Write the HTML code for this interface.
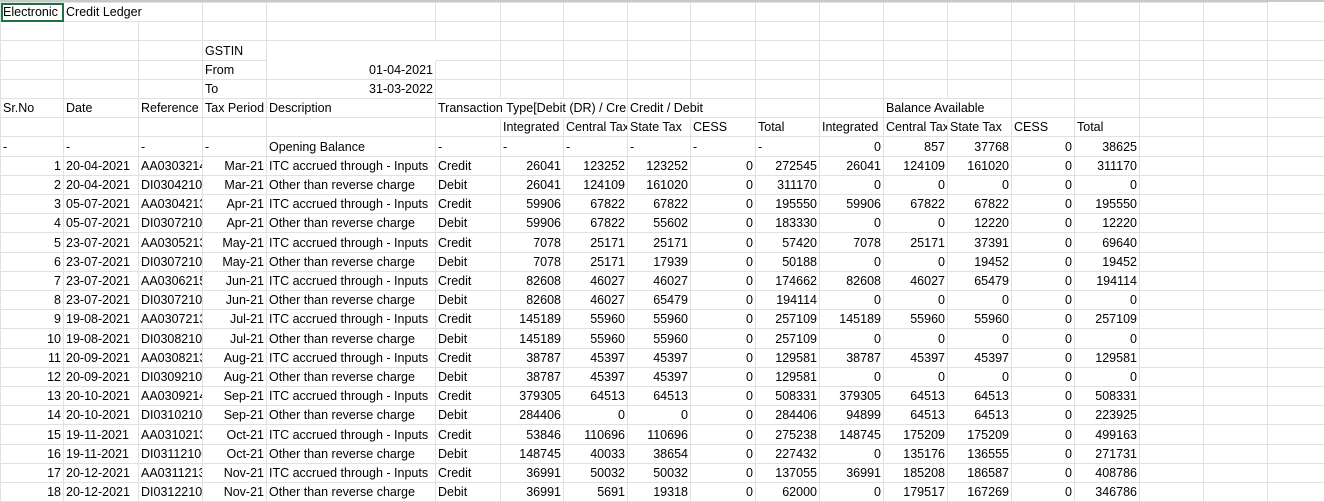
<!DOCTYPE html>
<html><head><meta charset="utf-8"><style>
body{margin:0;width:1324px;height:497px;overflow:hidden;background:#fff;font-family:"Liberation Sans",Arial,sans-serif;font-size:12.5px;color:#000;position:relative}
.top{position:absolute;left:0;top:0;width:1324px;height:2px;background:#c8c8c8}
table{position:absolute;left:0;top:2px;border-collapse:collapse;table-layout:fixed;width:1324px}
tr{height:19px}
tr.t{height:20px}
td{padding:0 2px;border:1px solid #e1e1e1;white-space:nowrap;overflow:hidden;line-height:16px;box-sizing:border-box}
.r{text-align:right}
.sel{outline:2px solid #1f7145;outline-offset:-2px}
.w{background:#fff;border-color:#fff}
</style></head><body>
<div class="top"></div>
<table>
<colgroup><col style="width:63px"><col style="width:75px"><col style="width:64px"><col style="width:64px"><col style="width:169px"><col style="width:65px"><col style="width:63px"><col style="width:64px"><col style="width:63px"><col style="width:65px"><col style="width:64px"><col style="width:64px"><col style="width:64px"><col style="width:64px"><col style="width:63px"><col style="width:65px"><col style="width:64px"><col style="width:64px"><col style="width:57px"></colgroup>
<tr><td class="sel">Electronic</td><td colspan="2">Credit Ledger</td><td></td><td></td><td></td><td></td><td></td><td></td><td></td><td></td><td></td><td></td><td></td><td></td><td></td><td></td><td></td></tr>
<tr><td></td><td></td><td></td><td></td><td></td><td></td><td></td><td></td><td></td><td></td><td></td><td></td><td></td><td></td><td></td><td></td><td></td><td></td><td></td></tr>
<tr class="t"><td></td><td></td><td></td><td>GSTIN</td><td class="w"></td><td></td><td></td><td></td><td></td><td></td><td></td><td></td><td></td><td></td><td></td><td></td><td></td><td></td><td></td></tr>
<tr><td></td><td></td><td></td><td>From</td><td class="r">01-04-2021</td><td></td><td></td><td></td><td></td><td></td><td></td><td></td><td></td><td></td><td></td><td></td><td></td><td></td><td></td></tr>
<tr><td></td><td></td><td></td><td>To</td><td class="r">31-03-2022</td><td></td><td></td><td></td><td></td><td></td><td></td><td></td><td></td><td></td><td></td><td></td><td></td><td></td><td></td></tr>
<tr><td>Sr.No</td><td>Date</td><td>Reference</td><td>Tax Period</td><td>Description</td><td colspan="3">Transaction Type[Debit (DR) / Cre</td><td colspan="2">Credit / Debit</td><td></td><td></td><td colspan="2">Balance Available</td><td></td><td></td><td></td><td></td><td></td></tr>
<tr><td></td><td></td><td></td><td></td><td></td><td></td><td>Integrated</td><td>Central Tax</td><td>State Tax</td><td>CESS</td><td>Total</td><td>Integrated</td><td>Central Tax</td><td>State Tax</td><td>CESS</td><td>Total</td><td></td><td></td><td></td></tr>
<tr class="t"><td>-</td><td>-</td><td>-</td><td>-</td><td>Opening Balance</td><td>-</td><td>-</td><td>-</td><td>-</td><td>-</td><td>-</td><td class="r">0</td><td class="r">857</td><td class="r">37768</td><td class="r">0</td><td class="r">38625</td><td></td><td></td><td></td></tr>
<tr><td class="r">1</td><td>20-04-2021</td><td>AA03032140</td><td class="r">Mar-21</td><td>ITC accrued through - Inputs</td><td>Credit</td><td class="r">26041</td><td class="r">123252</td><td class="r">123252</td><td class="r">0</td><td class="r">272545</td><td class="r">26041</td><td class="r">124109</td><td class="r">161020</td><td class="r">0</td><td class="r">311170</td><td></td><td></td><td></td></tr>
<tr><td class="r">2</td><td>20-04-2021</td><td>DI03042100</td><td class="r">Mar-21</td><td>Other than reverse charge</td><td>Debit</td><td class="r">26041</td><td class="r">124109</td><td class="r">161020</td><td class="r">0</td><td class="r">311170</td><td class="r">0</td><td class="r">0</td><td class="r">0</td><td class="r">0</td><td class="r">0</td><td></td><td></td><td></td></tr>
<tr><td class="r">3</td><td>05-07-2021</td><td>AA03042130</td><td class="r">Apr-21</td><td>ITC accrued through - Inputs</td><td>Credit</td><td class="r">59906</td><td class="r">67822</td><td class="r">67822</td><td class="r">0</td><td class="r">195550</td><td class="r">59906</td><td class="r">67822</td><td class="r">67822</td><td class="r">0</td><td class="r">195550</td><td></td><td></td><td></td></tr>
<tr><td class="r">4</td><td>05-07-2021</td><td>DI03072100</td><td class="r">Apr-21</td><td>Other than reverse charge</td><td>Debit</td><td class="r">59906</td><td class="r">67822</td><td class="r">55602</td><td class="r">0</td><td class="r">183330</td><td class="r">0</td><td class="r">0</td><td class="r">12220</td><td class="r">0</td><td class="r">12220</td><td></td><td></td><td></td></tr>
<tr class="t"><td class="r">5</td><td>23-07-2021</td><td>AA03052130</td><td class="r">May-21</td><td>ITC accrued through - Inputs</td><td>Credit</td><td class="r">7078</td><td class="r">25171</td><td class="r">25171</td><td class="r">0</td><td class="r">57420</td><td class="r">7078</td><td class="r">25171</td><td class="r">37391</td><td class="r">0</td><td class="r">69640</td><td></td><td></td><td></td></tr>
<tr><td class="r">6</td><td>23-07-2021</td><td>DI03072100</td><td class="r">May-21</td><td>Other than reverse charge</td><td>Debit</td><td class="r">7078</td><td class="r">25171</td><td class="r">17939</td><td class="r">0</td><td class="r">50188</td><td class="r">0</td><td class="r">0</td><td class="r">19452</td><td class="r">0</td><td class="r">19452</td><td></td><td></td><td></td></tr>
<tr><td class="r">7</td><td>23-07-2021</td><td>AA03062150</td><td class="r">Jun-21</td><td>ITC accrued through - Inputs</td><td>Credit</td><td class="r">82608</td><td class="r">46027</td><td class="r">46027</td><td class="r">0</td><td class="r">174662</td><td class="r">82608</td><td class="r">46027</td><td class="r">65479</td><td class="r">0</td><td class="r">194114</td><td></td><td></td><td></td></tr>
<tr><td class="r">8</td><td>23-07-2021</td><td>DI03072100</td><td class="r">Jun-21</td><td>Other than reverse charge</td><td>Debit</td><td class="r">82608</td><td class="r">46027</td><td class="r">65479</td><td class="r">0</td><td class="r">194114</td><td class="r">0</td><td class="r">0</td><td class="r">0</td><td class="r">0</td><td class="r">0</td><td></td><td></td><td></td></tr>
<tr><td class="r">9</td><td>19-08-2021</td><td>AA03072130</td><td class="r">Jul-21</td><td>ITC accrued through - Inputs</td><td>Credit</td><td class="r">145189</td><td class="r">55960</td><td class="r">55960</td><td class="r">0</td><td class="r">257109</td><td class="r">145189</td><td class="r">55960</td><td class="r">55960</td><td class="r">0</td><td class="r">257109</td><td></td><td></td><td></td></tr>
<tr class="t"><td class="r">10</td><td>19-08-2021</td><td>DI03082100</td><td class="r">Jul-21</td><td>Other than reverse charge</td><td>Debit</td><td class="r">145189</td><td class="r">55960</td><td class="r">55960</td><td class="r">0</td><td class="r">257109</td><td class="r">0</td><td class="r">0</td><td class="r">0</td><td class="r">0</td><td class="r">0</td><td></td><td></td><td></td></tr>
<tr><td class="r">11</td><td>20-09-2021</td><td>AA03082130</td><td class="r">Aug-21</td><td>ITC accrued through - Inputs</td><td>Credit</td><td class="r">38787</td><td class="r">45397</td><td class="r">45397</td><td class="r">0</td><td class="r">129581</td><td class="r">38787</td><td class="r">45397</td><td class="r">45397</td><td class="r">0</td><td class="r">129581</td><td></td><td></td><td></td></tr>
<tr><td class="r">12</td><td>20-09-2021</td><td>DI03092100</td><td class="r">Aug-21</td><td>Other than reverse charge</td><td>Debit</td><td class="r">38787</td><td class="r">45397</td><td class="r">45397</td><td class="r">0</td><td class="r">129581</td><td class="r">0</td><td class="r">0</td><td class="r">0</td><td class="r">0</td><td class="r">0</td><td></td><td></td><td></td></tr>
<tr><td class="r">13</td><td>20-10-2021</td><td>AA03092140</td><td class="r">Sep-21</td><td>ITC accrued through - Inputs</td><td>Credit</td><td class="r">379305</td><td class="r">64513</td><td class="r">64513</td><td class="r">0</td><td class="r">508331</td><td class="r">379305</td><td class="r">64513</td><td class="r">64513</td><td class="r">0</td><td class="r">508331</td><td></td><td></td><td></td></tr>
<tr><td class="r">14</td><td>20-10-2021</td><td>DI03102100</td><td class="r">Sep-21</td><td>Other than reverse charge</td><td>Debit</td><td class="r">284406</td><td class="r">0</td><td class="r">0</td><td class="r">0</td><td class="r">284406</td><td class="r">94899</td><td class="r">64513</td><td class="r">64513</td><td class="r">0</td><td class="r">223925</td><td></td><td></td><td></td></tr>
<tr class="t"><td class="r">15</td><td>19-11-2021</td><td>AA03102130</td><td class="r">Oct-21</td><td>ITC accrued through - Inputs</td><td>Credit</td><td class="r">53846</td><td class="r">110696</td><td class="r">110696</td><td class="r">0</td><td class="r">275238</td><td class="r">148745</td><td class="r">175209</td><td class="r">175209</td><td class="r">0</td><td class="r">499163</td><td></td><td></td><td></td></tr>
<tr><td class="r">16</td><td>19-11-2021</td><td>DI03112100</td><td class="r">Oct-21</td><td>Other than reverse charge</td><td>Debit</td><td class="r">148745</td><td class="r">40033</td><td class="r">38654</td><td class="r">0</td><td class="r">227432</td><td class="r">0</td><td class="r">135176</td><td class="r">136555</td><td class="r">0</td><td class="r">271731</td><td></td><td></td><td></td></tr>
<tr><td class="r">17</td><td>20-12-2021</td><td>AA03112130</td><td class="r">Nov-21</td><td>ITC accrued through - Inputs</td><td>Credit</td><td class="r">36991</td><td class="r">50032</td><td class="r">50032</td><td class="r">0</td><td class="r">137055</td><td class="r">36991</td><td class="r">185208</td><td class="r">186587</td><td class="r">0</td><td class="r">408786</td><td></td><td></td><td></td></tr>
<tr><td class="r">18</td><td>20-12-2021</td><td>DI03122100</td><td class="r">Nov-21</td><td>Other than reverse charge</td><td>Debit</td><td class="r">36991</td><td class="r">5691</td><td class="r">19318</td><td class="r">0</td><td class="r">62000</td><td class="r">0</td><td class="r">179517</td><td class="r">167269</td><td class="r">0</td><td class="r">346786</td><td></td><td></td><td></td></tr>
</table>
</body></html>
